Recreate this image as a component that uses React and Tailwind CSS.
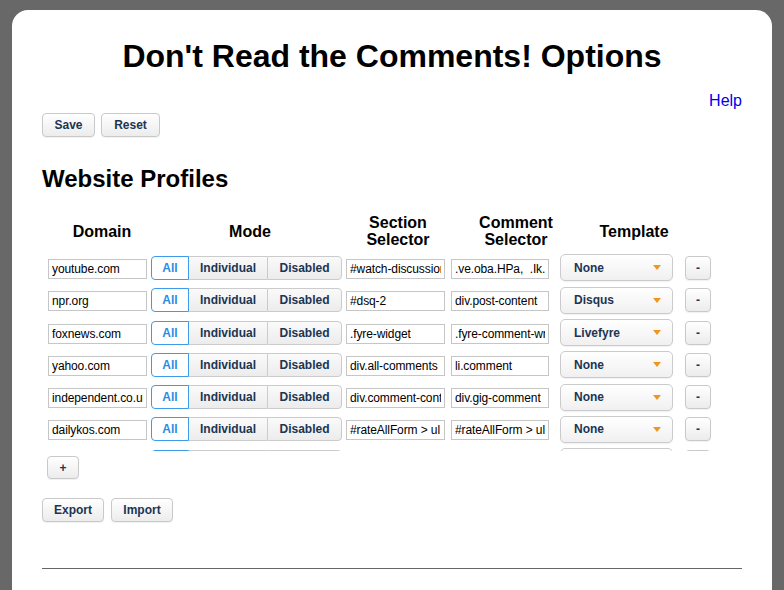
import React from 'react';

const profiles = [
  { domain: 'youtube.com', section: '#watch-discussion', comment: '.ve.oba.HPa,  .Ik.Wb', template: 'None' },
  { domain: 'npr.org', section: '#dsq-2', comment: 'div.post-content', template: 'Disqus' },
  { domain: 'foxnews.com', section: '.fyre-widget', comment: '.fyre-comment-wrapper', template: 'Livefyre' },
  { domain: 'yahoo.com', section: 'div.all-comments', comment: 'li.comment', template: 'None' },
  { domain: 'independent.co.uk', section: 'div.comment-container', comment: 'div.gig-comment', template: 'None' },
  { domain: 'dailykos.com', section: '#rateAllForm > ul', comment: '#rateAllForm > ul li', template: 'None' },
  // next row sits under the scroll edge, only its top border shows
  { domain: '', section: '', comment: '', template: '', ghost: true },
];

const btn =
  'h-6 rounded-[4px] border border-[#c9c9c9] bg-linear-to-b from-white to-[#ececec] text-[12px] font-bold text-[#1b3553] shadow-[0_1px_1px_rgba(0,0,0,0.06)]';

function TextField({ value, width }) {
  return (
    <input
      readOnly
      value={value}
      className={`h-5 ${width} border border-[#c6c6c6] bg-white px-[3px] text-[12px] tracking-[-0.1px] text-black outline-none`}
    />
  );
}

function Row({ p }) {
  return (
    <div className="flex h-[32.3px] items-center">
      <div className="ml-[6px]">
        <TextField value={p.domain} width="w-[99px]" />
      </div>

      {/* Mode */}
      <div className="ml-[4px] flex h-6 w-[191px] text-[12px] font-bold">
        <div className="flex w-[38px] items-center justify-center rounded-l-[4px] border border-[#3d9ce9] bg-white text-[#2a8de4]">
          {p.ghost ? '' : 'All'}
        </div>
        <div className="flex w-[78px] items-center justify-center border-y border-[#cbcbcb] bg-linear-to-b from-[#fafafa] to-[#ececec] text-[#1b3553]">
          {p.ghost ? '' : 'Individual'}
        </div>
        <div className="flex flex-1 items-center justify-center rounded-r-[4px] border border-[#cbcbcb] bg-linear-to-b from-[#fafafa] to-[#ececec] text-[#1b3553]">
          {p.ghost ? '' : 'Disabled'}
        </div>
      </div>

      <div className="ml-[4px]">
        <TextField value={p.section} width="w-[99px]" />
      </div>
      <div className="ml-[6px]">
        <TextField value={p.comment} width="w-[98px]" />
      </div>

      {/* Template */}
      <div className="ml-[11px] flex h-[27px] w-[113px] items-center justify-between rounded-[5px] border border-[#cbcbcb] bg-linear-to-b from-white to-[#f0f0f0] pl-[13px] pr-[11px] shadow-[0_1px_1px_rgba(0,0,0,0.06)]">
        <span className="text-[12px] font-bold text-[#1b3553]">{p.template}</span>
        <svg width="8" height="5" viewBox="0 0 8 5">
          <path d="M0 0 L8 0 L4 5 Z" fill="#f0961e" />
        </svg>
      </div>

      <button className={`${btn} ml-[12px] w-[26px]`}>{p.ghost ? '' : '-'}</button>
    </div>
  );
}

export default function App() {
  return (
    <div className="min-h-screen overflow-hidden bg-[#686868] px-[12px] pt-[10px] font-['Liberation_Sans',Arial,sans-serif]">
      <div className="min-h-[600px] rounded-t-[16px] bg-white px-[30px] pt-[28px]">
        {/* Header */}
        <h1 className="text-center text-[32px] font-bold leading-[37px] text-black">
          Don't Read the Comments! Options
        </h1>
        <div className="mt-[17px] flex justify-end">
          <a className="text-[16px] leading-[18px] text-[#0000ee]">Help</a>
        </div>
        <div className="mt-[3px] flex gap-[6px]">
          <button className={`${btn} w-[53px]`}>Save</button>
          <button className={`${btn} w-[59px]`}>Reset</button>
        </div>

        {/* Profiles */}
        <h2 className="mt-[28px] text-[24px] font-bold leading-[28px] text-black">Website Profiles</h2>

        <div className="mt-[21px] flex h-[34px] items-center text-center text-[16px] font-bold leading-[17px] text-black">
          <div className="w-[120px]">Domain</div>
          <div className="w-[176px]">Mode</div>
          <div className="w-[120px]">
            Section
            <br />
            Selector
          </div>
          <div className="w-[116px]">
            Comment
            <br />
            Selector
          </div>
          <div className="w-[120px]">Template</div>
        </div>

        <div className="mt-[3.85px] h-[199.65px] overflow-hidden">
          {profiles.map((p, i) => (
            <Row key={i} p={p} />
          ))}
        </div>

        <div className="mt-[3.5px] pl-[5px]">
          <button className={`${btn} h-[23px] w-[32px]`}>+</button>
        </div>

        <div className="mt-[19px] flex gap-[7px]">
          <button className={`${btn} w-[62px]`}>Export</button>
          <button className={`${btn} w-[62px]`}>Import</button>
        </div>

        <hr className="mt-[46px] border-t border-[#666]" />
      </div>
    </div>
  );
}
